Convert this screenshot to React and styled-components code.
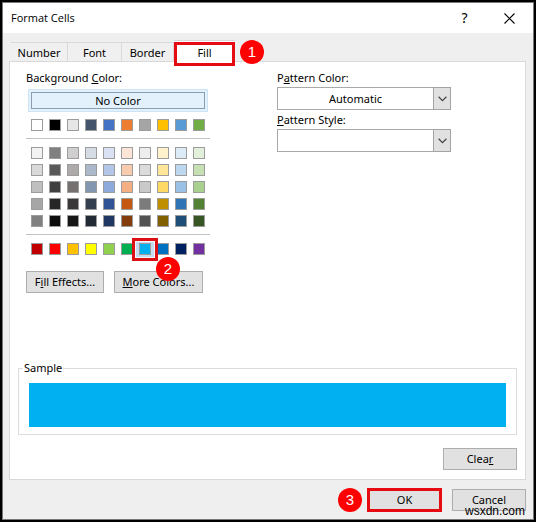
import React, { useState } from "react";
import styled, { createGlobalStyle, css } from "styled-components";

const GlobalStyle = createGlobalStyle`
  * { box-sizing: border-box; }
  body {
    margin: 0;
    background: #000;
    color: #000;
    font: 11px/16px "Noto Sans", "Open Sans", sans-serif;
  }
  button, select, input { font: inherit; color: inherit; margin: 0; }
`;

const Frame = styled.div`
  min-height: 100vh;
  padding: 2px;
  display: flex;
`;

const Dialog = styled.section`
  flex: 1;
  display: flex;
  flex-direction: column;
  border: 1px solid #777;
  background: #efefef;
`;

const TitleBar = styled.header`
  display: flex;
  align-items: center;
  height: 30px;
  padding: 0 18px 0 8px;
  background: #fff;
`;

const Title = styled.h1`
  flex: 1;
  margin: 0;
  font: 11px/16px "Open Sans", sans-serif;
`;

const TitleButton = styled.button`
  display: grid;
  place-items: center;
  width: 45px;
  height: 28px;
  padding: 0;
  border: 0;
  background: none;
  font-size: 14px;
  &:last-child { width: 12px; margin-left: 16px; }
`;

const Tabs = styled.div`
  display: flex;
  align-items: flex-end;
  height: 28px;
  padding-left: 8px;
`;

const Tab = styled.button`
  width: ${(p) => p.$width}px;
  height: 19px;
  padding: 2px 0 0;
  border: 1px solid #d9d9d9;
  border-width: 1px 1px 0 0;
  background: #f0f0f0;
  line-height: 16px;
`;

const ActiveTab = styled.button`
  position: relative;
  z-index: 1;
  width: 61px;
  height: 26px;
  margin-bottom: -5px;
  padding: 0;
  border: 0;
  border-top: 1px solid #d9d9d9;
  background: #fff;
`;

const TabLabel = styled.span`
  display: block;
  height: 24px;
  margin-top: 1px;
  border: 3px solid #e60b12;
  line-height: 16px;
`;

const Step = styled.span`
  display: grid;
  place-items: center;
  width: 24px;
  height: 24px;
  border-radius: 50%;
  background: #fe0000;
  color: #fff;
  font: 15px/24px "Liberation Sans", sans-serif;
`;

const TabStep = styled(Step)`
  position: relative;
  z-index: 1;
  margin: 0 0 -3px 5px;
`;

const Panel = styled.main`
  flex: 1;
  display: flex;
  flex-direction: column;
  margin: 0 7px 0 6px;
  padding: 8px 8px 9px;
  border: 1px solid #d9d9d9;
  background: #fff;
`;

const Columns = styled.div`
  display: flex;
  gap: 67px;
  padding-left: 8px;
`;

const ColorColumn = styled.div`
  width: 184px;
`;

const Label = styled.label`
  display: block;
`;

const NoColor = styled.button`
  display: block;
  width: 180px;
  height: 23px;
  margin: 3px 0 7px 2px;
  padding: 2px;
  border: 1px solid #cbe4f7;
  background: #e2f1fc;
`;

const NoColorLabel = styled.span`
  display: block;
  border: 1px solid #8c9db0;
  line-height: 15px;
`;

const SwatchGrid = styled.div`
  display: grid;
  grid-template-columns: repeat(10, 12px);
  gap: 5px 6px;
  padding: 0 5px 7px;
  & + & {
    padding-top: 8px;
    border-top: 1px solid #c3c3c3;
  }
`;

const Cell = styled.span`
  position: relative;
  height: 12px;
  ${(p) =>
    p.$marked &&
    css`
      z-index: 1;
      &::before {
        content: "";
        position: absolute;
        inset: -5px -7px -6px;
        border: 3px solid #dc0f14;
        background: #c5dcf3;
        box-shadow: inset 0 0 0 1px #f4f8fc;
      }
    `}
`;

const Swatch = styled.input`
  appearance: none;
  position: relative;
  display: block;
  width: 12px;
  height: 12px;
  border: 1px solid #9c9c9c;
  background: ${(p) => p.$color};
`;

const ColorActions = styled.div`
  position: relative;
  display: flex;
  gap: 10px;
  margin-top: 9px;
`;

const Button = styled.button`
  width: ${(p) => p.$width}px;
  height: 22px;
  flex: none;
  padding: 0;
  border: 1px solid #adadad;
  background: #e1e1e1;
  line-height: 18px;
  white-space: nowrap;
`;

const SwatchStep = styled(Step)`
  position: absolute;
  left: 130px;
  top: -14px;
`;

const PatternColumn = styled.div`
  width: 174px;
`;

const SelectBox = styled.div`
  display: grid;
  grid-template-columns: 1fr 18px;
  height: 23px;
  margin: 1px 0 2px;
`;

const Select = styled.select`
  grid-area: 1 / 1 / 2 / 3;
  appearance: none;
  width: 100%;
  padding: 0 18px 0 1px;
  border: 1px solid #a9a9a9;
  border-radius: 0;
  background: #fff;
  text-align: center;
  text-align-last: center;
`;

const Arrow = styled.span`
  grid-area: 1 / 2;
  display: grid;
  place-items: center;
  border: 1px solid #a3a3a3;
  background: #e1e1e1;
  z-index: 1;
  pointer-events: none;
`;

const Sample = styled.fieldset`
  min-width: 0;
  margin: auto 0 13px;
  padding: 7px 10px;
  border: 1px solid #dcdcdc;
`;

const Legend = styled.legend`
  margin-left: -6px;
  padding: 0 1px;
`;

const SampleFill = styled.div`
  height: 44px;
  background: ${(p) => p.$color};
`;

const PanelActions = styled.div`
  display: flex;
  justify-content: flex-end;
`;

const Footer = styled.footer`
  position: relative;
  display: flex;
  align-items: center;
  justify-content: flex-end;
  gap: 10px;
  padding: 8px 7px 7px;
`;

const FooterStep = styled(Step)`
  margin-right: -5px;
`;

const OkButton = styled.button`
  width: 75px;
  height: 24px;
  padding: 0;
  border: 3px solid #e60b12;
  background: #e1e1e1;
  line-height: 16px;
`;

const Watermark = styled.span`
  position: absolute;
  right: 8px;
  bottom: 0;
  font: 12px/15px "Liberation Sans", sans-serif;
`;

const THEME = [
  ["#ffffff", "#000000", "#e7e6e6", "#44546a", "#4472c4", "#ed7d31", "#a5a5a5", "#ffc000", "#5b9bd5", "#70ad47"],
];
const SHADES = [
  ["#f2f2f2", "#808080", "#d0cece", "#d6dce4", "#d9e1f2", "#fce4d6", "#ededed", "#fff2cc", "#ddebf7", "#e2efda"],
  ["#d9d9d9", "#595959", "#aeaaaa", "#acb9ca", "#b4c6e7", "#f8cbad", "#dbdbdb", "#ffe699", "#bdd7ee", "#c6e0b4"],
  ["#bfbfbf", "#404040", "#757171", "#8497b0", "#8ea9db", "#f4b084", "#c9c9c9", "#ffd966", "#9bc2e6", "#a9d08e"],
  ["#a6a6a6", "#262626", "#3a3838", "#333f4f", "#305496", "#c65911", "#7b7b7b", "#bf8f00", "#2f75b5", "#548235"],
  ["#808080", "#0d0d0d", "#161616", "#222b35", "#203764", "#833c0c", "#525252", "#806000", "#1f4e78", "#375623"],
];
const STANDARD = [
  ["#c00000", "#ff0000", "#ffc000", "#ffff00", "#92d050", "#00b050", "#00b0f0", "#0070c0", "#002060", "#7030a0"],
];
const MARKED = "#00b0f0";

function Swatches({ rows, color, onPick }) {
  return (
    <SwatchGrid>
      {rows.flat().map((c, i) => (
        <Cell key={i} $marked={c === MARKED}>
          <Swatch
            type="radio"
            name="background"
            aria-label={c}
            $color={c}
            checked={c === color}
            onChange={() => onPick(c)}
          />
        </Cell>
      ))}
    </SwatchGrid>
  );
}

function DropArrow() {
  return (
    <Arrow>
      <svg width="9" height="6" viewBox="0 0 9 6" fill="none" stroke="#444" strokeWidth="1.2">
        <path d="M.6.8 4.5 4.6 8.4.8" />
      </svg>
    </Arrow>
  );
}

export default function App() {
  const [color, setColor] = useState(MARKED);
  return (
    <>
      <GlobalStyle />
      <Frame>
        <Dialog aria-label="Format Cells">
          <TitleBar>
            <Title>Format Cells</Title>
            <TitleButton aria-label="Help">?</TitleButton>
            <TitleButton aria-label="Close">
              <svg width="11" height="11" viewBox="0 0 11 11" stroke="#000" strokeWidth="1.1">
                <path d="M.5.5l10 10M10.500.5l-10 10" />
              </svg>
            </TitleButton>
          </TitleBar>
          <Tabs role="tablist">
            <Tab role="tab" $width={57}>Number</Tab>
            <Tab role="tab" $width={54}>Font</Tab>
            <Tab role="tab" $width={52}>Border</Tab>
            <ActiveTab role="tab" aria-selected="true">
              <TabLabel>Fill</TabLabel>
            </ActiveTab>
            <TabStep>1</TabStep>
          </Tabs>
          <Panel>
            <Columns>
              <ColorColumn>
                <Label as="div">Background <u>C</u>olor:</Label>
                <NoColor onClick={() => setColor("#ffffff")}>
                  <NoColorLabel>No Color</NoColorLabel>
                </NoColor>
                <Swatches rows={THEME} color={color} onPick={setColor} />
                <Swatches rows={SHADES} color={color} onPick={setColor} />
                <Swatches rows={STANDARD} color={color} onPick={setColor} />
                <ColorActions>
                  <Button $width={78}>F<u>i</u>ll Effects...</Button>
                  <Button $width={89}><u>M</u>ore Colors...</Button>
                  <SwatchStep>2</SwatchStep>
                </ColorActions>
              </ColorColumn>
              <PatternColumn>
                <Label htmlFor="pattern-color">P<u>a</u>ttern Color:</Label>
                <SelectBox>
                  <Select id="pattern-color"><option>Automatic</option></Select>
                  <DropArrow />
                </SelectBox>
                <Label htmlFor="pattern-style"><u>P</u>attern Style:</Label>
                <SelectBox>
                  <Select id="pattern-style"><option value="" aria-label="None" /></Select>
                  <DropArrow />
                </SelectBox>
              </PatternColumn>
            </Columns>
            <Sample>
              <Legend>Sample</Legend>
              <SampleFill $color={color} />
            </Sample>
            <PanelActions>
              <Button $width={74}>Clea<u>r</u></Button>
            </PanelActions>
          </Panel>
          <Footer>
            <FooterStep>3</FooterStep>
            <OkButton>OK</OkButton>
            <Button $width={74}>Cancel</Button>
            <Watermark>wsxdn.com</Watermark>
          </Footer>
        </Dialog>
      </Frame>
    </>
  );
}
